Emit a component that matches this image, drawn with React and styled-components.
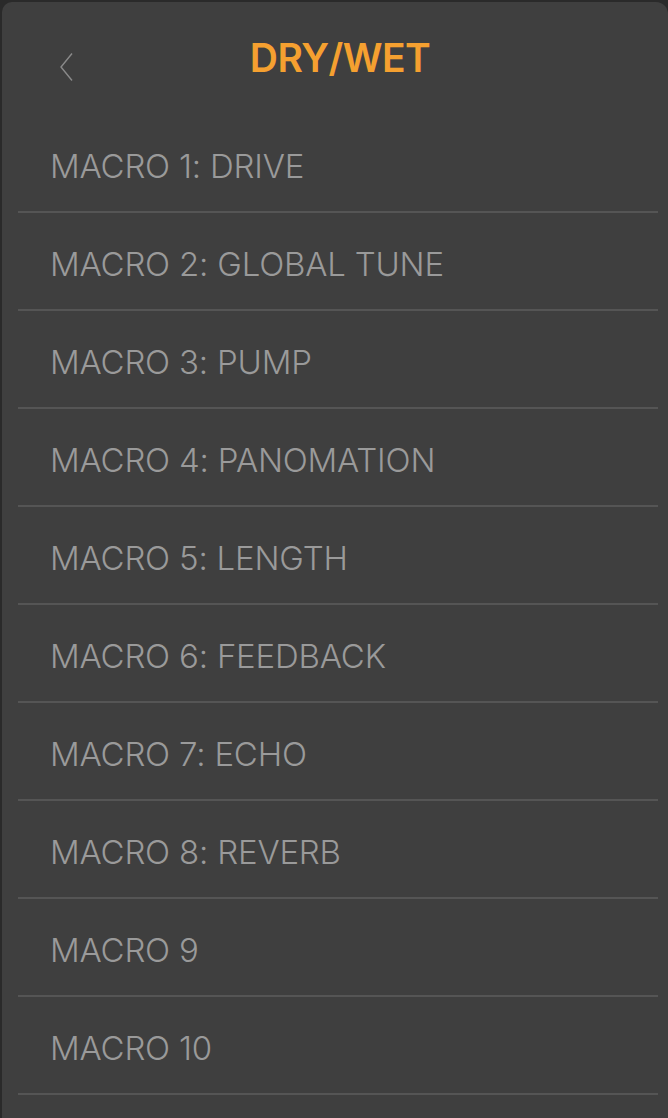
import React from 'react';
import styled, { createGlobalStyle } from 'styled-components';

const GlobalStyle = createGlobalStyle`
  html, body {
    margin: 0;
    padding: 0;
    background: #2a2a2a;
    height: 100%;
  }
  #root {
    height: 100%;
  }
`;

const Screen = styled.div`
  height: 1118px;
  padding: 2px 0 0 2px;
  box-sizing: border-box;
  overflow: hidden;
`;

const Panel = styled.div`
  height: 100%;
  background: #3f3f3f;
  border-radius: 10px 12px 0 0;
  display: flex;
  flex-direction: column;
`;

const Header = styled.div`
  flex-shrink: 0;
  height: 113px;
  position: relative;
  display: flex;
  align-items: center;
  justify-content: center;
  padding: 0 0 2px 10px;
  box-sizing: border-box;
`;

const BackButton = styled.button`
  position: absolute;
  left: 56px;
  top: 50px;
  width: 16px;
  height: 30px;
  padding: 0;
  border: none;
  background: none;
  display: flex;
  align-items: center;
  justify-content: center;
`;

const Title = styled.h1`
  margin: 0;
  font-family: Inter, 'Open Sans', sans-serif;
  font-weight: 600;
  font-size: 39px;
  letter-spacing: -0.6px;
  color: #f5a030;
`;

const List = styled.ul`
  flex-shrink: 0;
  list-style: none;
  margin: 0;
  padding: 0;
`;

const Row = styled.li`
  margin: 0 10px 0 16px;
  border-bottom: 2px solid #555555;
  display: flex;
  align-items: center;
  padding: 6px 0 0 32px;
  height: 90px;
  font-family: Inter, 'Open Sans', sans-serif;
  font-weight: 300;
  font-size: 33px;
  letter-spacing: -0.2px;
  color: #9a9a9a;
`;

const macros = [
  'MACRO 1: DRIVE',
  'MACRO 2: GLOBAL TUNE',
  'MACRO 3: PUMP',
  'MACRO 4: PANOMATION',
  'MACRO 5: LENGTH',
  'MACRO 6: FEEDBACK',
  'MACRO 7: ECHO',
  'MACRO 8: REVERB',
  'MACRO 9',
  'MACRO 10',
];

export default function App() {
  return (
    <>
      <GlobalStyle />
      <Screen>
        <Panel>
          <Header>
            <BackButton aria-label="Back">
              <svg width="14" height="30" viewBox="0 0 14 30">
                <path d="M13 1.5 L2 15 L13 28.5" fill="none" stroke="#8a8a8a" strokeWidth="1.4" />
              </svg>
            </BackButton>
            <Title>DRY/WET</Title>
          </Header>
          <List>
            {macros.map((m) => (
              <Row key={m}>{m}</Row>
            ))}
          </List>
        </Panel>
      </Screen>
    </>
  );
}
